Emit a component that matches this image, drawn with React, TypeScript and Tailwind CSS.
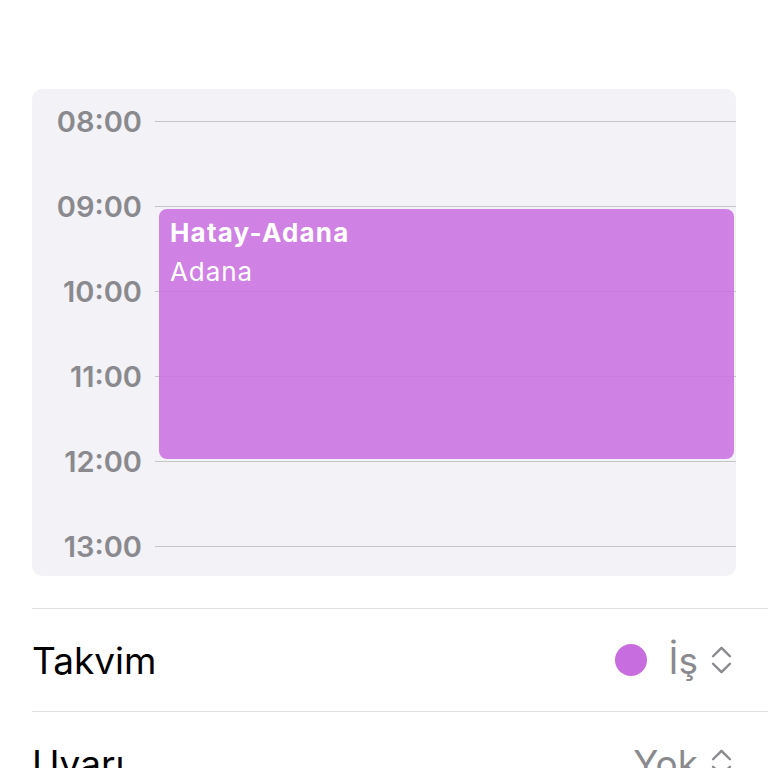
const hours = ['08:00', '09:00', '10:00', '11:00', '12:00', '13:00']

function UpDown({ className = '' }: { className?: string }) {
  return (
    <svg viewBox="0 0 24 32" className={className} fill="none" stroke="#8a8a8e" strokeWidth={2.6} strokeLinecap="round" strokeLinejoin="round">
      <path d="M3 12 L12 3 L21 12" />
      <path d="M3 20 L12 29 L21 20" />
    </svg>
  )
}

export default function App() {
  return (
    <div
      className="h-[768px] w-[768px] overflow-hidden bg-white"
      style={{ fontFamily: 'Inter, "Noto Sans", sans-serif' }}
    >
      <div className="px-8 pt-[89px]">
        <div className="relative rounded-[10px] bg-[#f2f2f7] pt-[17px] pb-[15px]">
          <div className="flex flex-col gap-[55px]">
            {hours.map((h) => (
              <div key={h} className="flex h-[30px] items-center">
                <div className="w-[110px] text-right text-[29px] font-semibold leading-none text-[#8a8a8e]">{h}</div>
                <div className="ml-[13px] h-px flex-1 bg-[#c6c6c8]" />
              </div>
            ))}
          </div>
          <div className="absolute top-[120px] right-[2px] left-[127px] h-[250px] rounded-[8px] bg-[#cb74e1]/90 px-[11px] pt-[8px] text-white">
            <div className="text-[26px] font-bold leading-[31px] tracking-[1.2px]">Hatay-Adana</div>
            <div className="mt-[8px] text-[26px] leading-[31px] tracking-[0.9px]">Adana</div>
          </div>
        </div>
      </div>

      <div className="mt-[32px] pl-8">
        <div className="flex h-[103px] items-center justify-between border-t border-[#e0e0e3] pr-[35px]">
          <span className="text-[37px] leading-none text-black">Takvim</span>
          <div className="flex items-center">
            <span className="h-[32px] w-[32px] rounded-full bg-[#c86ddf]" />
            <span className="ml-[22px] text-[37px] leading-none text-[#8a8a8e]">İş</span>
            <UpDown className="ml-[12px] h-[30px] w-[23px]" />
          </div>
        </div>
        <div className="flex h-[103px] items-center justify-between border-t border-[#e0e0e3] pr-[35px]">
          <span className="text-[37px] leading-none text-black">Uyarı</span>
          <div className="flex items-center">
            <span className="text-[37px] leading-none text-[#8a8a8e]">Yok</span>
            <UpDown className="ml-[12px] h-[30px] w-[23px]" />
          </div>
        </div>
      </div>
    </div>
  )
}
